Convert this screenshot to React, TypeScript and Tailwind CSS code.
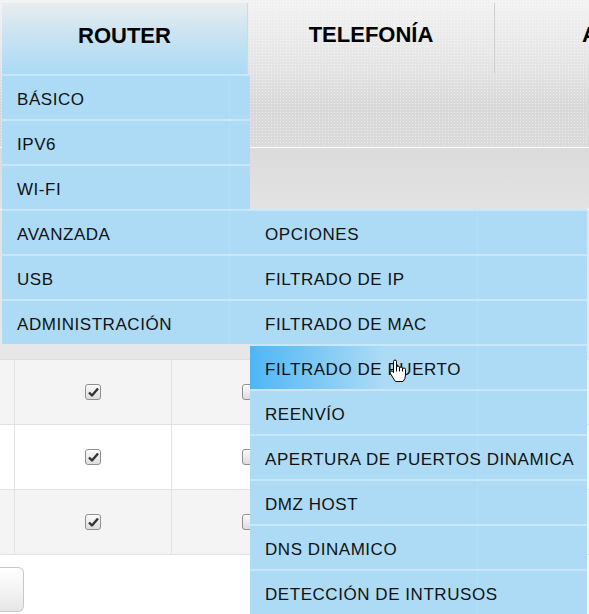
import React from "react";

const routerItems = ["BÁSICO", "IPV6", "WI-FI", "AVANZADA", "USB", "ADMINISTRACIÓN"];

const avanzadaItems = [
  "OPCIONES",
  "FILTRADO DE IP",
  "FILTRADO DE MAC",
  "FILTRADO DE PUERTO",
  "REENVÍO",
  "APERTURA DE PUERTOS DINAMICA",
  "DMZ HOST",
  "DNS DINAMICO",
  "DETECCIÓN DE INTRUSOS",
];

function Checkbox({ checked }: { checked?: boolean }) {
  return (
    <span className="flex h-[16px] w-[16px] items-center justify-center rounded-[3px] border border-[#8f8f8f] bg-[linear-gradient(#fbfbfb,#dcdcdc)] shadow-[inset_0_1px_0_#fff]">
      {checked && (
        <svg width="11" height="10" viewBox="0 0 11 10">
          <path d="M1 5.5 L4 8.5 L10 1.5" fill="none" stroke="#333" strokeWidth="2.4" strokeLinejoin="round" />
        </svg>
      )}
    </span>
  );
}

function MenuItem({ label, active }: { label: string; active?: boolean }) {
  return (
    <div
      className={
        "flex h-[45px] border-t-2 border-[#c9e7fa] " +
        (active
          ? "bg-[linear-gradient(to_right,#4fb6f6,#addbf5_40%)]"
          : "bg-[#addbf5]")
      }
    >
      <div className="flex w-[228px] shrink-0 items-center whitespace-nowrap border-r border-[#b6dff7] pl-[15px] pt-[4px] text-[17px] tracking-[0.55px] text-[#111]">
        {label}
      </div>
      <div className="flex-1" />
    </div>
  );
}

function HandCursor() {
  return (
    <svg width="18" height="24" viewBox="-0.5 -0.5 18 23" className="absolute left-[389px] top-[359px]">
      <path
        d="M4 1.6 Q4 0 5.5 0 Q7 0 7 1.6 V7.2 Q7 6 8.5 6 Q10 6 10 7.5 V8.2 Q10 7 11.5 7 Q13 7 13 8.5 V9.2 Q13 8 14.5 8 Q16 8 16 9.6 V15 Q16 19 13.5 21.5 H6 Q4.5 19.5 3 17 L0.8 13.2 Q0 11.6 1.3 11.1 Q2.6 10.6 4 12.6 Z"
        fill="#fff"
        stroke="#000"
        strokeWidth="1"
        strokeLinejoin="round"
      />
      <path d="M7 7 V11.5 M10 8 V11.5 M13 9 V11.5" stroke="#000" strokeWidth="1" />
    </svg>
  );
}

function TableRow({ shaded }: { shaded?: boolean }) {
  return (
    <div className={"flex h-[65px] border-b border-[#e2e2e2] " + (shaded ? "bg-[#f4f4f4]" : "bg-white")}>
      <div className="w-[15px] shrink-0 border-r border-[#e2e2e2]" />
      <div className="flex w-[157px] shrink-0 items-center justify-center border-r border-[#e2e2e2]">
        <Checkbox checked />
      </div>
      <div className="flex w-[157px] shrink-0 items-center justify-center border-r border-[#e2e2e2]">
        <Checkbox />
      </div>
      <div className="flex-1" />
    </div>
  );
}

export default function App() {
  return (
    <div
      className="relative h-[614px] w-[589px] overflow-hidden bg-white"
      style={{ fontFamily: '"Liberation Sans", Arial, sans-serif' }}
    >
      {/* barra de navegación */}
      <div className="h-[147px] bg-[radial-gradient(rgba(255,255,255,0.55)_0.8px,transparent_1px),linear-gradient(#f2f2f2,#e4e4e4_45%,#d8d8d8_72%,#dadada)] bg-[length:3px_3px,100%_100%] pt-[3px]">
        <div className="flex h-[72px] overflow-hidden">
          <div className="ml-[2px] flex w-[246px] shrink-0 items-center justify-center border-r border-[#cfd9df] border-b border-b-white bg-[linear-gradient(#e9edf0,#c9e3f2_45%,#acdaf5)] pb-[7px] text-[22px] font-bold text-black">
            ROUTER
          </div>
          <div className="flex w-[246px] shrink-0 items-center justify-center pb-[10px] text-[22px] font-bold text-black">
            TELEFONÍA
          </div>
          <div className="mb-[2px] w-px shrink-0 bg-[#cfcfcf]" />
          <div className="flex shrink-0 items-center whitespace-nowrap pb-[10px] pl-[87px] text-[22px] font-bold text-black">
            AVANZADO
          </div>
        </div>
      </div>
      <div className="h-px bg-white" />
      <div className="h-[61px] bg-[linear-gradient(#dbdbdb,#e3e3e3)]" />
      <div className="h-px w-[497px] bg-white" />

      {/* tabla */}
      <div className="h-[150px] border-b border-[#dedede] bg-[linear-gradient(#e3e3e3,#e8e8e8)]" />
      <TableRow shaded />
      <TableRow />
      <TableRow shaded />
      <div className="mt-[12px] h-[45px] w-[24px] rounded-r-[6px] border border-l-0 border-[#c8c8c8] bg-[linear-gradient(#ffffff,#f4f4f4_50%,#e6e6e6)]" />

      {/* menú ROUTER */}
      <div className="absolute left-[2px] top-[74px] w-[248px]">
        {routerItems.map((item) => (
          <MenuItem key={item} label={item} />
        ))}
      </div>

      {/* submenú AVANZADA */}
      <div className="absolute left-[250px] top-[209px] w-[337px]">
        {avanzadaItems.map((item) => (
          <MenuItem key={item} label={item} active={item === "FILTRADO DE PUERTO"} />
        ))}
      </div>

      <HandCursor />
    </div>
  );
}
